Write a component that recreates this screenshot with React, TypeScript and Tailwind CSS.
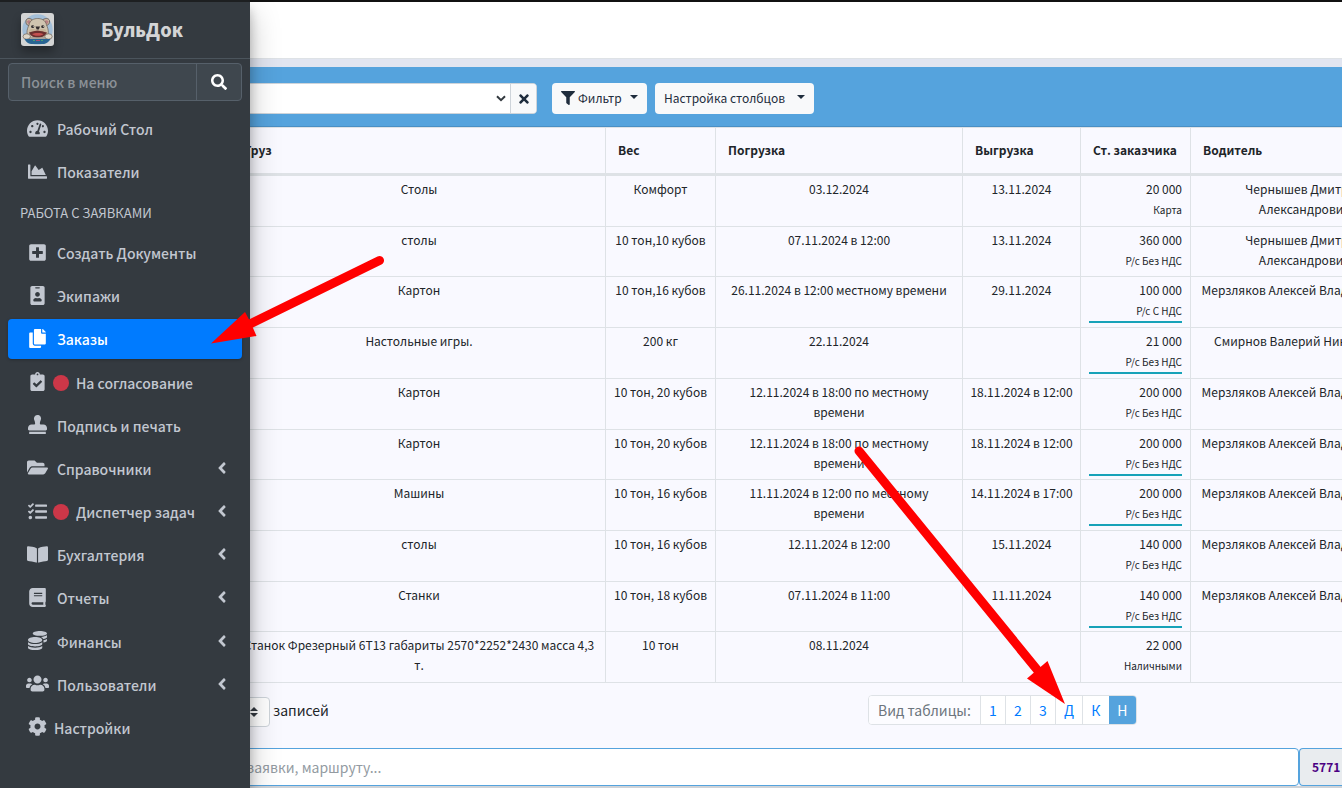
import React from "react";
import type { IconType } from "react-icons";
import {
  FaAngleLeft,
  FaBook,
  FaBookOpen,
  FaChartArea,
  FaClipboardCheck,
  FaCog,
  FaCoins,
  FaCopy,
  FaFilter,
  FaFolderOpen,
  FaIdBadge,
  FaPlusSquare,
  FaSearch,
  FaStamp,
  FaTachometerAlt,
  FaTasks,
  FaTimes,
  FaUsers,
} from "react-icons/fa";

type NavItem = {
  label: string;
  icon: IconType;
  size: string;
  active?: boolean;
  dot?: boolean;
  more?: boolean;
  tight?: boolean;
};

const topItems: NavItem[] = [
  { label: "Рабочий Стол", icon: FaTachometerAlt, size: "size-[21px]" },
  { label: "Показатели", icon: FaChartArea, size: "size-[19px]" },
];

const workItems: NavItem[] = [
  { label: "Создать Документы", icon: FaPlusSquare, size: "size-[19px]" },
  { label: "Экипажи", icon: FaIdBadge, size: "size-[19px]" },
  { label: "Заказы", icon: FaCopy, size: "size-[19px]", active: true },
  { label: "На согласование", icon: FaClipboardCheck, size: "size-[19px]", dot: true },
  { label: "Подпись и печать", icon: FaStamp, size: "size-[19px]" },
  { label: "Справочники", icon: FaFolderOpen, size: "size-[21px]", more: true },
  { label: "Диспетчер задач", icon: FaTasks, size: "size-[19px]", dot: true, more: true },
  { label: "Бухгалтерия", icon: FaBookOpen, size: "size-[21px]", more: true },
  { label: "Отчеты", icon: FaBook, size: "size-[19px]", more: true },
  { label: "Финансы", icon: FaCoins, size: "size-[19px]", more: true },
  { label: "Пользователи", icon: FaUsers, size: "size-[23px]", more: true },
  { label: "Настройки", icon: FaCog, size: "size-[19px]", tight: true },
];

type Order = {
  cargo: string;
  weight: string;
  load: string;
  unload: string;
  price: string;
  pay: string;
  marked?: boolean;
  driver: string[];
};

const merz = ["Мерзляков Алексей Владимирович"];
const chern = ["Чернышев Дмитрий", "Александрович"];

const orders: Order[] = [
  { cargo: "Столы", weight: "Комфорт", load: "03.12.2024", unload: "13.11.2024", price: "20 000", pay: "Карта", driver: chern },
  { cargo: "столы", weight: "10 тон,10 кубов", load: "07.11.2024 в 12:00", unload: "13.11.2024", price: "360 000", pay: "Р/с Без НДС", driver: chern },
  { cargo: "Картон", weight: "10 тон,16 кубов", load: "26.11.2024 в 12:00 местному времени", unload: "29.11.2024", price: "100 000", pay: "Р/с С НДС", marked: true, driver: merz },
  { cargo: "Настольные игры.", weight: "200 кг", load: "22.11.2024", unload: "", price: "21 000", pay: "Р/с Без НДС", marked: true, driver: ["Смирнов Валерий Николаевич"] },
  { cargo: "Картон", weight: "10 тон, 20 кубов", load: "12.11.2024 в 18:00 по местному времени", unload: "18.11.2024 в 12:00", price: "200 000", pay: "Р/с Без НДС", driver: merz },
  { cargo: "Картон", weight: "10 тон, 20 кубов", load: "12.11.2024 в 18:00 по местному времени", unload: "18.11.2024 в 12:00", price: "200 000", pay: "Р/с Без НДС", marked: true, driver: merz },
  { cargo: "Машины", weight: "10 тон, 16 кубов", load: "11.11.2024 в 12:00 по местному времени", unload: "14.11.2024 в 17:00", price: "200 000", pay: "Р/с Без НДС", marked: true, driver: merz },
  { cargo: "столы", weight: "10 тон, 16 кубов", load: "12.11.2024 в 12:00", unload: "15.11.2024", price: "140 000", pay: "Р/с Без НДС", driver: merz },
  { cargo: "Станки", weight: "10 тон, 18 кубов", load: "07.11.2024 в 11:00", unload: "11.11.2024", price: "140 000", pay: "Р/с Без НДС", marked: true, driver: merz },
  { cargo: "Станок Фрезерный 6Т13 габариты 2570*2252*2430 масса 4,3 т.", weight: "10 тон", load: "08.11.2024", unload: "", price: "22 000", pay: "Наличными", driver: [] },
];

const headers = ["Груз", "Вес", "Погрузка", "Выгрузка", "Ст. заказчика", "Водитель"];

function Logo() {
  return (
    <svg viewBox="0 0 33 33" className="size-[33px] rounded-[3px] shadow-[0_6px_10px_rgba(0,0,0,0.3)]" aria-hidden="true">
      <rect width="33" height="33" fill="#d3d4d4" />
      <circle cx="16.5" cy="16.5" r="15.2" fill="#a3bfd8" />
      <path d="M5 7.500C6 4.800 9 5 11.500 7L8 13C5.500 12 4.500 10 5 7.500Z" fill="#cbb9a2" stroke="#51443d" strokeWidth=".7" />
      <path d="M28.500 7.500C27.500 4.800 24 5 21.500 7L25 13C27.500 12 29 10 28.500 7.500Z" fill="#cbb9a2" stroke="#51443d" strokeWidth=".7" />
      <path d="M6.300 8.300C7 6.800 8.500 7 10 8L8 11.300C6.700 10.700 6 9.500 6.300 8.300Z" fill="#b97f83" />
      <path d="M27.200 8.300C26.500 6.800 25 7 23.500 8L25.500 11.300C26.700 10.700 27.500 9.500 27.200 8.300Z" fill="#b97f83" />
      <path d="M8 12C9 7 13 5.500 16.700 5.500S24.500 7 25.500 12C28 17 28 22 25 25H8.500C5 22 5.500 17 8 12Z" fill="#cfc4b0" stroke="#5d5047" strokeWidth=".6" />
      <path d="M8.500 17C11 15 14 15.500 16.700 18C19.500 15.500 23 15 25 17L26 22H7.500Z" fill="#c6b398" />
      <ellipse cx="11.700" cy="13.700" rx="1.600" ry="1.400" fill="#302b2b" />
      <ellipse cx="21.800" cy="13.700" rx="1.600" ry="1.400" fill="#302b2b" />
      <circle cx="12.300" cy="13.200" r=".5" fill="#ddd" />
      <circle cx="22.400" cy="13.200" r=".5" fill="#ddd" />
      <path d="M14.500 13.500H19L17.800 16.500H15.700Z" fill="#342d2e" />
      <path d="M8 19.500C11 18.600 14 18 16.700 17.500C19.500 18 23 18.600 26 19.500C24 24 20 24.500 16.700 24.500S10 24 8 19.500Z" fill="#6b302f" />
      <path d="M11 21C13 19.500 20.500 19.500 22.500 21C21 23.400 12.500 23.400 11 21Z" fill="#c4504f" />
      <path d="M8 24.500H26V27H8Z" fill="#aaa39a" />
      <ellipse cx="5.700" cy="23.500" rx="3.700" ry="2.700" fill="#ddd6c8" stroke="#5d5047" strokeWidth=".6" />
      <ellipse cx="27.500" cy="23.500" rx="3.700" ry="2.700" fill="#ddd6c8" stroke="#5d5047" strokeWidth=".6" />
      <path d="M3.500 26H29.500C28 29 25 30.700 23 31H10C7 30.500 5 29 3.500 26Z" fill="#286492" />
      <path d="M12 27.500H14M20 27.500H22" stroke="#4b9e74" strokeWidth="1" />
      <path d="M15 27.500H19" stroke="#a84e70" strokeWidth="1" />
    </svg>
  );
}

function NavLink({ item }: { item: NavItem }) {
  const Icon = item.icon;
  return (
    <li>
      <a
        href="#"
        className={
          item.active
            ? "flex h-10 items-center rounded bg-[#007bff] pl-[15px] pr-3 text-white shadow-[0_1px_3px_rgba(0,0,0,0.25)]"
            : "flex h-10 items-center rounded pl-[15px] pr-3 text-[#c2c7d0]"
        }
      >
        <span className="flex w-7 shrink-0 justify-center pb-0.5">
          <Icon className={item.size} />
        </span>
        {item.dot && <span className="ml-0.5 mr-[7px] size-4 rounded-full bg-[#cc3748]" />}
        <span className={item.dot ? "flex-1" : item.tight ? "ml-[3px] flex-1" : "ml-1.5 flex-1"}>{item.label}</span>
        {item.more && <FaAngleLeft className="mb-0.5 size-[18px] translate-x-px" />}
      </a>
    </li>
  );
}

function Sidebar() {
  return (
    <aside className="absolute inset-y-0 left-0 z-20 w-[250px] border-t-2 border-[#1d1f21] bg-[#343a40] text-[14px] font-medium leading-6 shadow-[0_14px_28px_rgba(0,0,0,0.25),0_10px_10px_rgba(0,0,0,0.22)]">
      <a href="#" className="flex h-[57px] items-center border-b border-[#4b545c] pb-0.5 pl-[21px] text-[#d3d4d5]">
        <Logo />
        <span className="flex-1 pr-5 text-center text-[18px] font-black">БульДок</span>
      </a>
      <div className="px-2">
        <form className="mt-1 flex h-[38px] overflow-hidden rounded border border-[#56606a] bg-[#3f474e]">
          <input
            type="search"
            aria-label="Поиск в меню"
            placeholder="Поиск в меню"
            className="min-w-0 flex-1 bg-transparent px-3 text-white outline-none placeholder:text-[#8b9197]"
          />
          <button type="button" aria-label="Найти" className="flex w-[45px] items-center justify-center border-l border-[#56606a] text-white">
            <FaSearch className="size-4" />
          </button>
        </form>
        <nav className="pt-2">
          <ul className="flex flex-col gap-[3px]">
            {topItems.map((item) => (
              <NavLink key={item.label} item={item} />
            ))}
          </ul>
          <h2 className="flex h-[41px] items-center pl-3 text-[13px] font-normal leading-5 text-[#c2c7d0]">РАБОТА С ЗАЯВКАМИ</h2>
          <ul className="flex h-[515px] flex-col justify-between">
            {workItems.map((item) => (
              <NavLink key={item.label} item={item} />
            ))}
          </ul>
        </nav>
      </div>
    </aside>
  );
}

function Caret() {
  return <span className="mb-0.5 ml-auto border-x-4 border-t-4 border-x-transparent border-t-current" />;
}

function Toolbar() {
  return (
    <div className="flex h-[60px] items-end border-b border-[#4a8fc4] bg-[#55a3dd] pb-3 text-[12px] leading-5 text-[#1f2d3d]">
      <div className="flex h-[31px] w-[305px] overflow-hidden rounded-r border border-[#ced4da] bg-white">
        <div className="relative flex-1">
          <select aria-label="Заявка" className="h-full w-full appearance-none bg-white" />
          <svg viewBox="0 0 10 7" className="pointer-events-none absolute right-1 top-[11px] h-[7px] w-[10px]" aria-hidden="true">
            <path d="M1 1.200L5 5.200L9 1.200" fill="none" stroke="#343a40" strokeWidth="2" />
          </svg>
        </div>
        <button type="button" aria-label="Очистить" className="flex w-[26px] items-center justify-center border-l border-[#ced4da] bg-[#f8f9fa]">
          <FaTimes className="size-3.5" />
        </button>
      </div>
      <button type="button" className="ml-[15px] flex h-[31px] min-w-[95px] items-center rounded bg-[#f8f9fa] px-[9px] pb-0.5">
        <FaFilter className="mr-[3px] size-3.5" />
        Фильтр
        <Caret />
      </button>
      <button type="button" className="ml-2 flex h-[31px] min-w-[159px] items-center rounded bg-[#f8f9fa] px-[9px] pb-0.5">
        Настройка столбцов
        <Caret />
      </button>
    </div>
  );
}

function OrdersTable() {
  return (
    <table className="h-[556px] w-full min-w-[1187px] table-fixed border-collapse border-y border-[#dee2e6] text-[12px] leading-5">
      <colgroup>
        <col className="w-[373px]" />
        <col className="w-[110px]" />
        <col className="w-[247px]" />
        <col className="w-[118px]" />
        <col className="w-[110px]" />
        <col />
      </colgroup>
      <thead>
        <tr>
          {headers.map((h) => (
            <th key={h} className="h-[47px] border-b-[3px] border-r border-[#dee2e6] px-3 pb-0.5 text-left font-bold whitespace-nowrap">
              {h}
            </th>
          ))}
        </tr>
      </thead>
      <tbody className="text-center align-top">
        {orders.map((o, i) => (
          <tr key={i}>
            <td className="border border-[#dee2e6] px-2 pt-[3px]">{o.cargo}</td>
            <td className="border border-[#dee2e6] pt-[3px] whitespace-nowrap">{o.weight}</td>
            <td className="border border-[#dee2e6] px-2 pt-[3px]">{o.load}</td>
            <td className="border border-[#dee2e6] pt-[3px] whitespace-nowrap">{o.unload}</td>
            <td className="border border-[#dee2e6] px-2 pt-[3px] text-right">
              <div className={o.marked ? "border-b-2 border-[#17a2b8]" : "border-b-2 border-transparent"}>
                {o.price}
                <div className="pt-px text-[10px] leading-5">{o.pay}</div>
              </div>
            </td>
            <td className="border border-[#dee2e6] pt-[3px] whitespace-nowrap">
              {o.driver.map((line) => (
                <div key={line}>{line}</div>
              ))}
            </td>
          </tr>
        ))}
      </tbody>
    </table>
  );
}

function Footer() {
  return (
    <div className="text-[14px] leading-6">
      <div className="flex items-center pt-2.5">
        <label className="flex items-center gap-[3px]">
          <span className="relative mt-1 flex">
            <select aria-label="Количество записей" className="h-[30px] w-[38px] appearance-none rounded border border-[#ced4da] bg-white" />
            <svg viewBox="0 0 8 10" className="pointer-events-none absolute right-3 top-2.5 h-2.5 w-2" aria-hidden="true">
              <path d="M4 0L8 4H0ZM4 10L0 6H8Z" fill="#343a40" />
            </svg>
          </span>
          записей
        </label>
        <nav aria-label="Вид таблицы" className="ml-[539px] flex h-[30px] overflow-hidden rounded border border-[#dee2e6] bg-white">
          <span className="w-[111px] bg-[#fcfcff] pt-0.5 text-center text-[#6c757d]">Вид таблицы:</span>
          {["1", "2", "3"].map((v) => (
            <a key={v} href="#" className="w-[25px] border-l border-[#dee2e6] pt-0.5 text-center text-[#007bff]">{v}</a>
          ))}
          {["Д", "К"].map((v) => (
            <a key={v} href="#" className="w-[27px] border-l border-[#dee2e6] pt-0.5 text-center text-[#007bff]">{v}</a>
          ))}
          <a href="#" aria-current="page" className="w-[27px] bg-[#55a3dd] pt-0.5 text-center text-white">Н</a>
        </nav>
      </div>
      <div className="mt-[21px] flex h-[38px]">
        <input
          type="text"
          aria-label="Поиск по номеру заявки, маршруту"
          placeholder="заявки, маршруту..."
          className="min-w-0 flex-1 rounded border border-[#55a3dd] bg-white pl-3.5 outline-none placeholder:text-[#939ba2]"
        />
        <span className="flex w-[43px] items-center rounded-l border border-r-0 border-[#55a3dd] bg-[#e9ecef] pl-3 text-[12px] font-bold text-[#4b0082]">5771</span>
      </div>
    </div>
  );
}

function Arrows() {
  return (
    <svg className="pointer-events-none absolute left-0 top-0 z-30 h-[788px] w-[1342px]" viewBox="0 0 1342 788" fill="#f00" stroke="#f00" aria-hidden="true">
      <path d="M379.500 260.500L248 325" strokeWidth="9" strokeLinecap="round" />
      <path d="M211 343.500L245 312L249 319.500L253 328L256.500 336Z" stroke="none" />
      <path d="M859 451L1039 672" strokeWidth="9" strokeLinecap="round" />
      <path d="M1065 704L1047.500 661L1027 678.500Z" stroke="none" />
    </svg>
  );
}

export default function App() {
  return (
    <div className="relative min-h-screen overflow-hidden bg-[#cfd3d8] font-['Noto_Sans_CJK_SC','Noto_Sans',sans-serif] text-[#212529]">
      <Sidebar />
      <main className="pl-[232px]">
        <header className="h-[59px] border-b border-t-2 border-b-[#dee2e6] border-t-[#111] bg-white" />
        <div className="h-2 bg-[#e1e5f0]" />
        <Toolbar />
        <section className="bg-[#f9f9ff]">
          <OrdersTable />
          <Footer />
        </section>
      </main>
      <Arrows />
    </div>
  );
}
